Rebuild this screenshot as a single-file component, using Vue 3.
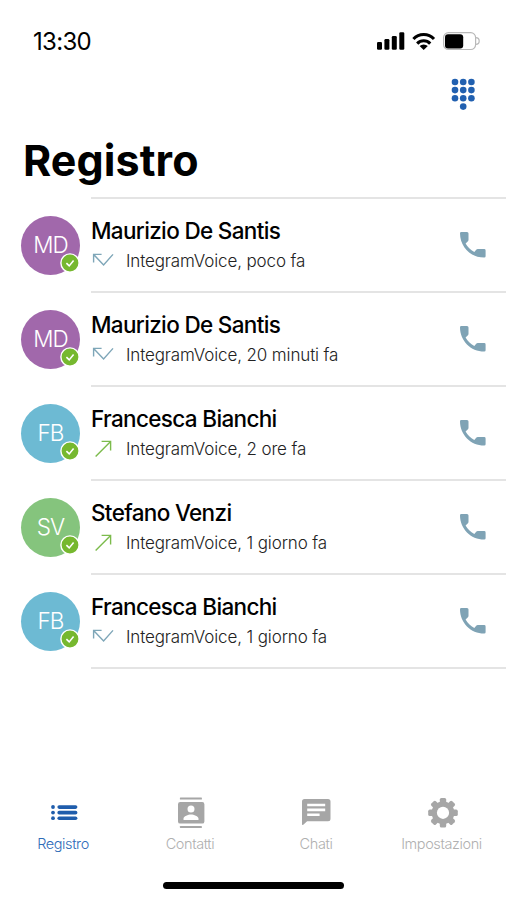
<script setup>
import { ref } from 'vue';

// call log
const calls = ref([
  { id: 1, name: 'Maurizio De Santis', initials: 'MD', color: 'purple', type: 'missed', when: 'poco fa' },
  { id: 2, name: 'Maurizio De Santis', initials: 'MD', color: 'purple', type: 'missed', when: '20 minuti fa' },
  { id: 3, name: 'Francesca Bianchi', initials: 'FB', color: 'blue', type: 'outgoing', when: '2 ore fa' },
  { id: 4, name: 'Stefano Venzi', initials: 'SV', color: 'green', type: 'outgoing', when: '1 giorno fa' },
  { id: 5, name: 'Francesca Bianchi', initials: 'FB', color: 'blue', type: 'missed', when: '1 giorno fa' },
]);

const tabs = [
  { id: 'log', label: 'Registro' },
  { id: 'contacts', label: 'Contatti' },
  { id: 'chat', label: 'Chati' },
  { id: 'settings', label: 'Impostazioni' },
];
const activeTab = ref('log');

// keypad dots: 3x3 plus the one at the bottom
const dots = [
  [4, 4], [12.2, 4], [20.4, 4],
  [4, 12.1], [12.2, 12.1], [20.4, 12.1],
  [4, 20.2], [12.2, 20.2], [20.4, 20.2],
  [12.2, 28.6],
];
</script>

<template>
  <div class="phone">
    <!-- Status bar -->
    <div class="status-bar">
      <span class="time">13:30</span>
      <svg class="status-icons" viewBox="0 0 106 20" width="106" height="20">
        <rect x="1" y="11" width="5" height="7.8" rx="1.3" />
        <rect x="8.4" y="8" width="5" height="10.8" rx="1.3" />
        <rect x="15.8" y="5" width="5" height="13.8" rx="1.3" />
        <rect x="23.3" y="1.2" width="5" height="17.6" rx="1.3" />
        <path class="wave" d="M37.4 8 A14.2 14.2 0 0 1 58 8" />
        <path class="wave" d="M41.2 12.6 A9 9 0 0 1 54.2 12.6" />
        <path d="M47.7 19 L43.6 15.1 A6 6 0 0 1 51.8 15.1 Z" />
        <rect class="battery" x="67.6" y="1.7" width="32" height="16.8" rx="4.8" />
        <path class="battery" d="M99.8 6.6 Q103.2 6.8 103.2 10 Q103.2 13.2 99.8 13.4" />
        <rect x="69" y="3.2" width="18.2" height="14.4" rx="3" />
      </svg>
    </div>

    <!-- Keypad -->
    <div class="toolbar">
      <svg class="keypad" viewBox="0 0 25 33" width="25" height="33">
        <circle v-for="(d, i) in dots" :key="i" :cx="d[0]" :cy="d[1]" r="3.3" />
      </svg>
    </div>

    <h1 class="title">Registro</h1>

    <!-- Calls -->
    <div class="call-list">
      <div v-for="call in calls" :key="call.id" class="call">
        <div class="avatar" :class="call.color">
          <span class="initials">{{ call.initials }}</span>
          <svg class="badge" viewBox="0 0 20 20" width="20" height="20">
            <circle cx="10" cy="10" r="9.1" />
            <path d="M6.4 10.1 L9.2 12.9 L13.6 7.6" />
          </svg>
        </div>
        <div class="call-body">
          <div class="call-text">
            <div class="name">{{ call.name }}</div>
            <div class="details">
              <svg v-if="call.type === 'missed'" class="arrow missed" viewBox="0 0 24 20" width="24" height="20">
                <path d="M2.6 11.5 V3.4 H10.6 M2.6 3.4 L12.6 14 L22 3.4" />
              </svg>
              <svg v-else class="arrow outgoing" viewBox="0 0 24 20" width="24" height="20">
                <path d="M4.6 17.4 L19.6 2.4 M10.6 2.4 H19.6 V11.4" />
              </svg>
              <span class="when">IntegramVoice, {{ call.when }}</span>
            </div>
          </div>
          <svg class="call-icon" viewBox="0 0 26 26" width="26" height="26">
            <path d="M1.3 0 H7 Q8.5 0 8.5 1.5 V7.8 Q8.5 8.9 7.7 9.6 L5.6 11.6 C7.5 15 10.5 18.2 14.3 20.1 L16 18 Q16.7 17 17.9 17 H24.2 Q25.6 17 25.6 18.4 V24.2 Q25.6 25.6 24.2 25.6 C10.6 25.6 0 14.8 0 1.3 Q0 0 1.3 0 Z" />
          </svg>
        </div>
      </div>
    </div>

    <!-- Bottom tabs -->
    <div class="tabs">
      <div
        v-for="tab in tabs"
        :key="tab.id"
        class="tab"
        :class="[tab.id, { active: tab.id === activeTab }]"
        @click="activeTab = tab.id"
      >
        <svg class="tab-icon" viewBox="0 0 34 34" width="34" height="34">
          <g v-if="tab.id === 'log'">
            <circle cx="7" cy="11" r="1.9" />
            <circle cx="7" cy="16.6" r="1.9" />
            <circle cx="7" cy="22.2" r="1.9" />
            <rect x="11.4" y="9.2" width="20" height="3.7" rx="1.8" />
            <rect x="11.4" y="14.8" width="20" height="3.7" rx="1.8" />
            <rect x="11.4" y="20.4" width="20" height="3.7" rx="1.8" />
          </g>
          <g v-else-if="tab.id === 'contacts'">
            <rect x="6.9" y="1.6" width="22" height="2" rx=".4" />
            <rect x="6.9" y="30" width="22" height="2" rx=".4" />
            <path fill-rule="evenodd" d="M7.2 6 H29.2 A2.2 2.2 0 0 1 31.4 8.2 V25.4 A2.2 2.2 0 0 1 29.2 27.6 H7.2 A2.2 2.2 0 0 1 5 25.4 V8.2 A2.2 2.2 0 0 1 7.2 6 Z M18 9.6 A3.5 3.5 0 1 0 18 16.6 A3.5 3.5 0 1 0 18 9.6 Z M10.5 24 H25.5 V22.6 C25.5 20 20.8 18.4 18 18.4 C15.2 18.4 10.5 20 10.5 22.6 Z" />
          </g>
          <g v-else-if="tab.id === 'chat'">
            <path fill-rule="evenodd" d="M5.5 3 H29 A2.5 2.5 0 0 1 31.5 5.5 V22.8 A2.5 2.5 0 0 1 29 25.3 H8.1 L4.3 28.7 Q3 29.6 3 28 V5.5 A2.5 2.5 0 0 1 5.5 3 Z M8.2 7.8 V10.3 H26.2 V7.8 Z M8.2 12.6 V15.2 H26.2 V12.6 Z M8.2 17.4 V20 H20.6 V17.4 Z" />
          </g>
          <g v-else>
            <!-- eight teeth, drawn as four bars through the centre -->
            <g transform="translate(18 16.8)">
              <rect
                v-for="angle in [0, 45, 90, 135]"
                :key="angle"
                x="-3.2"
                y="-14.8"
                width="6.4"
                height="29.6"
                rx="1.6"
                :transform="`rotate(${angle})`"
              />
              <circle r="11.4" />
              <circle class="hole" r="6.1" />
            </g>
          </g>
        </svg>
        <span class="tab-label">{{ tab.label }}</span>
      </div>
    </div>
    <div class="home-bar"></div>
  </div>
</template>

<style>
body {
  margin: 0;
  background: #fff;
}
</style>

<style scoped>
.phone {
  display: flex;
  flex-direction: column;
  box-sizing: border-box;
  width: 507px;
  height: 900px;
  overflow: hidden;
  background: #fff;
  color: #000;
  font-family: Inter, "Liberation Sans", sans-serif;
}

.status-bar {
  display: flex;
  justify-content: space-between;
  align-items: center;
  height: 22px;
  padding: 30px 25px 0 33px;
}
.time {
  padding-top: 1px;
  font-size: 24px;
  line-height: 22px;
  letter-spacing: -0.7px;
}
.status-icons {
  flex: none;
}
.wave {
  fill: none;
  stroke: #000;
  stroke-width: 3.1;
}
.battery {
  fill: none;
  stroke: #b9b9b9;
  stroke-width: 1.2;
}

.toolbar {
  display: flex;
  justify-content: flex-end;
  padding: 26px 31px 0 0;
}
.keypad {
  fill: #2160b0;
}

.title {
  margin: 24px 0 0 23px;
  height: 62px;
  font-size: 43px;
  line-height: 50px;
  font-weight: 700;
  letter-spacing: 0.1px;
}

.call-list {
  display: flex;
  flex-direction: column;
}
.call {
  display: flex;
  height: 94px;
  padding-left: 21px;
}
.avatar {
  position: relative;
  display: flex;
  align-items: center;
  justify-content: center;
  flex: none;
  width: 59px;
  height: 59px;
  margin-top: 19px;
  border-radius: 50%;
  color: #fff;
}
.avatar.purple {
  background: #a168ab;
}
.avatar.blue {
  background: #6dbad3;
}
.avatar.green {
  background: #85c47d;
}
.initials {
  margin-bottom: 1px;
  font-size: 22.5px;
  line-height: 24px;
  font-weight: 300;
  letter-spacing: -1px;
}
.badge {
  position: absolute;
  right: 0;
  bottom: 2px;
}
.badge circle {
  fill: #76b82f;
  stroke: #fff;
  stroke-width: 1.4;
}
.badge path {
  fill: none;
  stroke: #fff;
  stroke-width: 1.6;
}

.call-body {
  display: flex;
  justify-content: space-between;
  flex: 1;
  margin: 0 1px 0 11px;
  border-top: 2px solid #e4e4e4;
}
.call:last-child {
  height: 96px;
}
.call:last-child .call-body {
  border-bottom: 2px solid #e4e4e4;
}
.name {
  margin-top: 17px;
  font-size: 22.5px;
  line-height: 30px;
  font-weight: 500;
  letter-spacing: -0.66px;
  white-space: nowrap;
}
.details {
  display: flex;
  align-items: center;
  height: 30px;
}
.arrow {
  flex: none;
  margin-right: 11px;
  fill: none;
  stroke-width: 1.4;
}
.arrow.missed {
  stroke: #7ea6b8;
}
.arrow.outgoing {
  stroke: #7cbb4c;
}
.when {
  font-size: 17px;
  font-weight: 300;
  letter-spacing: -0.13px;
  color: #222;
  white-space: nowrap;
}
.call-icon {
  margin: 33px 20px 0 0;
  fill: #7fa3b5;
}

.tabs {
  display: grid;
  grid-template-columns: repeat(4, 126px);
  margin-top: auto;
  height: 86px;
}
.tab {
  display: flex;
  flex-direction: column;
  align-items: center;
  color: #b0b0b0;
}
.tab:not(.log) {
  padding-left: 2px;
}
.tab.settings {
  padding-left: 1px;
}
.tab-icon {
  fill: #a6a6a6;
}
.tab-label {
  margin-top: 4px;
  font-size: 14.5px;
  line-height: 20px;
  font-weight: 300;
  letter-spacing: -0.4px;
}
.tab.active {
  color: #2f6cb8;
}
.tab.active .tab-icon {
  fill: #1f5dac;
}
.tab-icon .hole {
  fill: #fff;
}
.home-bar {
  flex: none;
  align-self: center;
  width: 181px;
  height: 7px;
  margin-bottom: 11px;
  border-radius: 4px;
  background: #000;
}
</style>
